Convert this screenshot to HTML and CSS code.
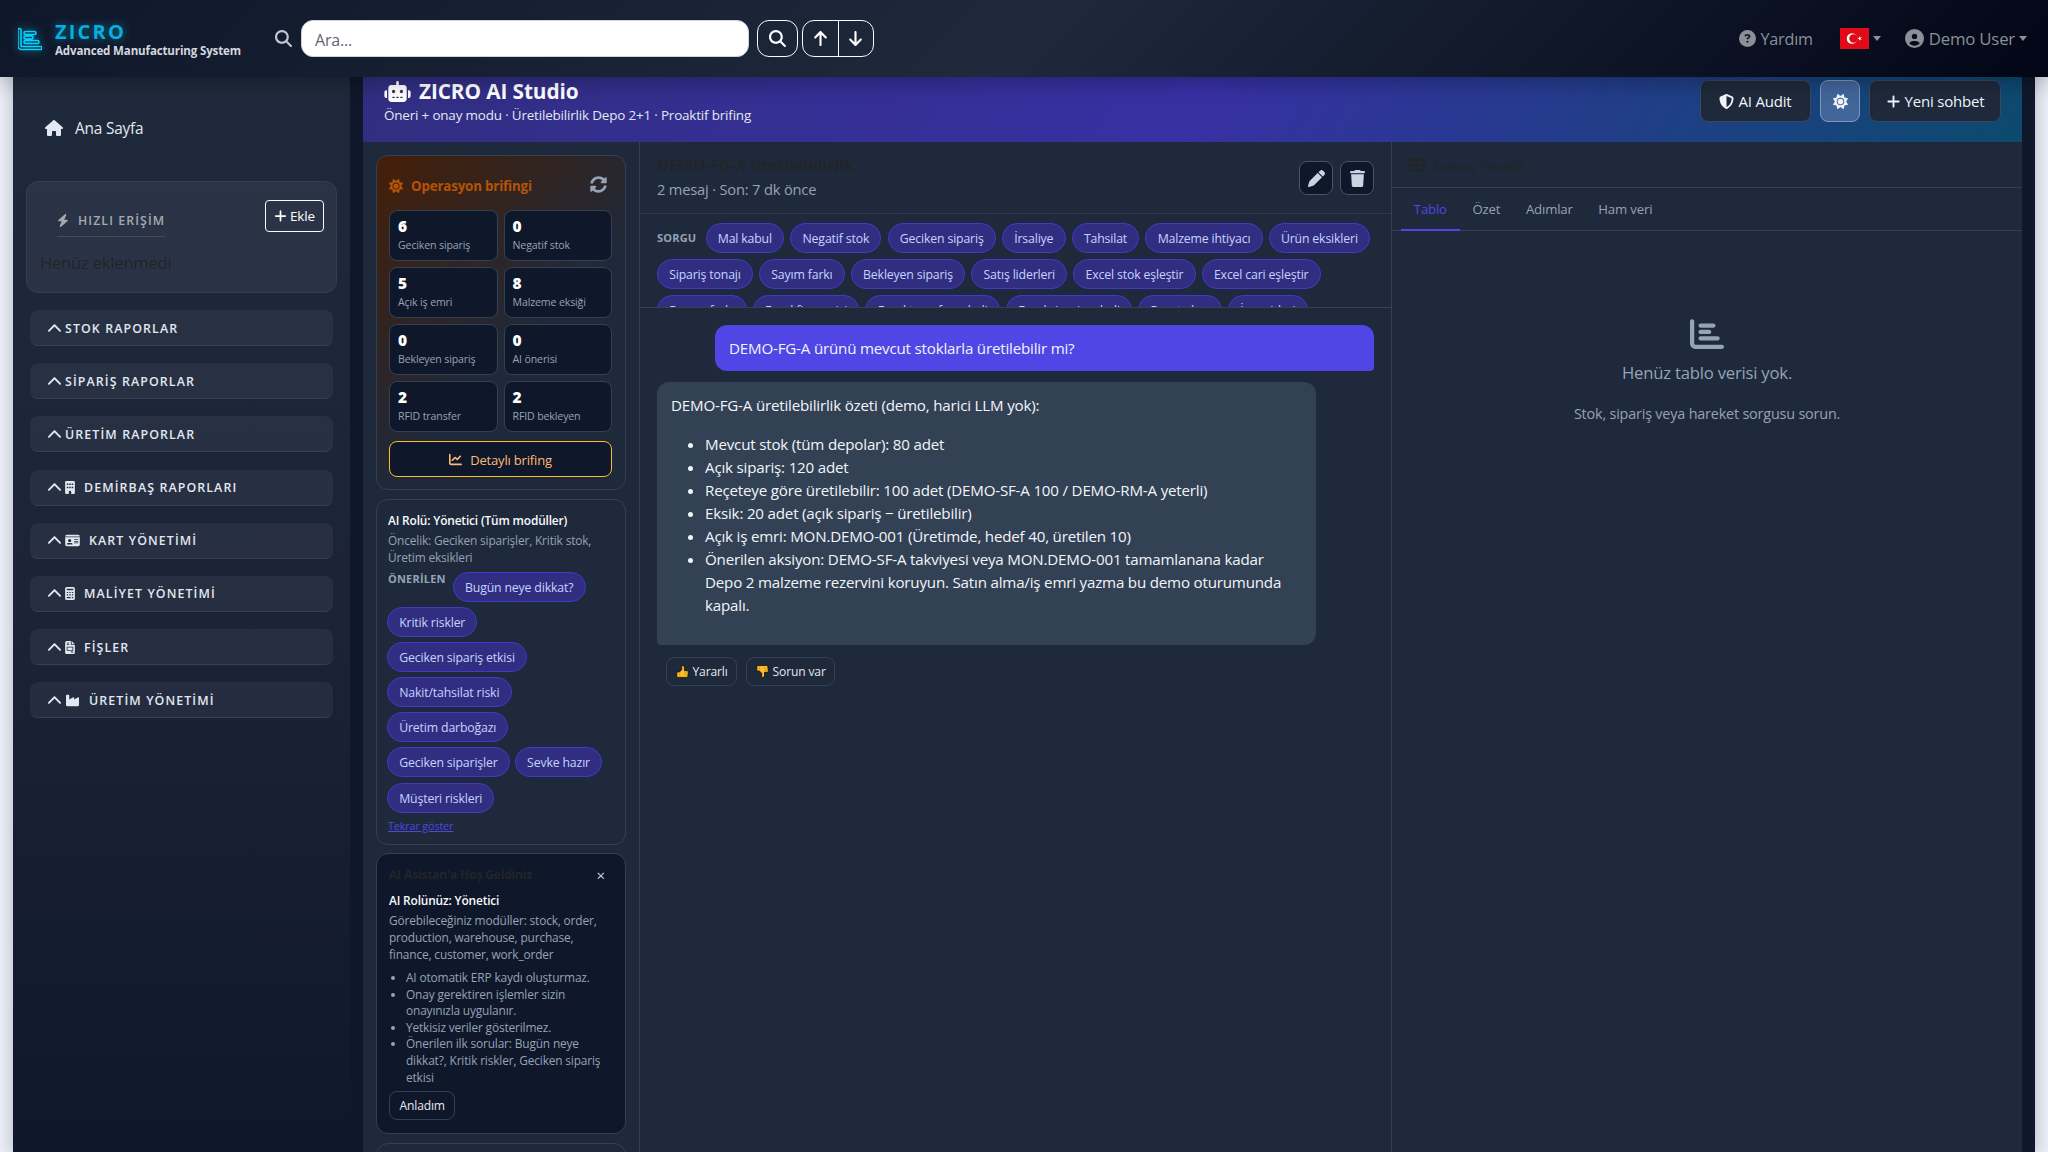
FILE: index.html
```html
<!DOCTYPE html>
<html lang="tr">
<head>
    <meta charset="UTF-8">
    <meta name="viewport" content="width=device-width, initial-scale=1.0">
    <title>ZICRO AI Studio</title>
    <link rel="stylesheet" href="styles.css">
</head>
<body>
    <!-- icon sprite -->
    <svg class="sprite" width="0" height="0">
        <symbol id="i-search" viewBox="0 0 512 512"><path d="M416 208c0 45.9-14.9 88.3-40 122.7L502.6 457.4c12.5 12.5 12.5 32.8 0 45.3s-32.8 12.5-45.3 0L330.7 376c-34.4 25.2-76.8 40-122.7 40C93.1 416 0 322.9 0 208S93.1 0 208 0S416 93.1 416 208zM208 352a144 144 0 1 0 0-288 144 144 0 1 0 0 288z"/></symbol>
        <symbol id="i-bars" viewBox="0 0 512 512"><path d="M32 32c17.7 0 32 14.3 32 32l0 336c0 8.8 7.2 16 16 16l400 0c17.7 0 32 14.3 32 32s-14.3 32-32 32L80 480c-44.2 0-80-35.8-80-80L0 64C0 46.3 14.3 32 32 32zm96 96c0-17.7 14.3-32 32-32l192 0c17.7 0 32 14.3 32 32s-14.3 32-32 32l-192 0c-17.7 0-32-14.3-32-32zm32 64l128 0c17.7 0 32 14.3 32 32s-14.3 32-32 32l-128 0c-17.7 0-32-14.3-32-32s14.3-32 32-32zm0 96l256 0c17.7 0 32 14.3 32 32s-14.3 32-32 32l-256 0c-17.7 0-32-14.3-32-32s14.3-32 32-32z"/></symbol>
        <symbol id="i-up" viewBox="0 0 384 512"><path d="M214.6 41.4c-12.5-12.5-32.8-12.5-45.3 0l-160 160c-12.5 12.5-12.5 32.8 0 45.3s32.8 12.5 45.3 0L160 141.2V448c0 17.7 14.3 32 32 32s32-14.3 32-32V141.2L329.4 246.6c12.5 12.5 32.8 12.5 45.3 0s12.5-32.8 0-45.3l-160-160z"/></symbol>
        <symbol id="i-house" viewBox="0 0 576 512"><path d="M543.8 287.6c17 0 32-14 32-32.1c1-9-3-17-11-24L309.5 7c-6-5-14-7-21-7s-15 1-22 8L10 231.5c-7 7-10 15-10 24c0 18 14 32.1 32 32.1h32V472c0 22.1 17.9 40 40 40h80c22 0 40-17.9 40-40v-88c0-17.7 14.3-32 32-32h64c17.7 0 32 14.3 32 32v88c0 22.1 18 40 40 40h80c22.1 0 40-17.9 40-40V287.6z"/></symbol>
        <symbol id="i-bolt" viewBox="0 0 448 512"><path d="M349.4 44.6c5.9-13.7 1.5-29.7-10.6-38.5s-28.6-8-39.9 1.8l-256 224c-10 8.8-13.6 22.9-8.9 35.3S50.7 288 64 288H175.5L98.6 467.4c-5.9 13.7-1.5 29.7 10.6 38.5s28.6 8 39.9-1.8l256-224c10-8.8 13.6-22.9 8.9-35.3s-16.6-20.7-30-20.7H272.5L349.4 44.6z"/></symbol>
        <symbol id="i-plus" viewBox="0 0 448 512"><path d="M256 80c0-17.7-14.3-32-32-32s-32 14.3-32 32V224H48c-17.7 0-32 14.3-32 32s14.3 32 32 32H192V432c0 17.7 14.3 32 32 32s32-14.3 32-32V288H400c17.7 0 32-14.3 32-32s-14.3-32-32-32H256V80z"/></symbol>
        <symbol id="i-help" viewBox="0 0 512 512"><path d="M256 512A256 256 0 1 0 256 0a256 256 0 1 0 0 512zM169.8 165.3c7.9-22.3 29.1-37.3 52.8-37.3h58.3c34.9 0 63.1 28.3 63.1 63.1c0 22.6-12.1 43.5-31.7 54.8L280 264.4c-.2 13-10.9 23.6-24 23.6c-13.3 0-24-10.7-24-24V250.5c0-8.6 4.6-16.5 12.1-20.8l44.3-25.4c4.7-2.7 7.6-7.7 7.6-13.1c0-8.4-6.8-15.1-15.1-15.1H222.6c-3.4 0-6.4 2.1-7.5 5.3l-.4 1.2c-4.4 12.5-18.2 19-30.6 14.6s-19-18.2-14.6-30.6l.4-1.2zM224 352a32 32 0 1 1 64 0 32 32 0 1 1 -64 0z"/></symbol>
        <symbol id="i-user" viewBox="0 0 512 512"><path d="M399 384.2C376.9 345.8 335.4 320 288 320H224c-47.4 0-88.9 25.8-111 64.2c35.2 39.2 86.2 63.8 143 63.8s107.8-24.7 143-63.8zM0 256a256 256 0 1 1 512 0A256 256 0 1 1 0 256zm256 16a72 72 0 1 0 0-144 72 72 0 1 0 0 144z"/></symbol>
        <symbol id="i-trash" viewBox="0 0 448 512"><path d="M135.2 17.7L128 32H32C14.3 32 0 46.3 0 64S14.3 96 32 96H416c17.7 0 32-14.3 32-32s-14.3-32-32-32H320l-7.2-14.3C307.4 6.8 296.3 0 284.2 0H163.8c-12.1 0-23.2 6.8-28.6 17.7zM416 128H32L53.2 467c1.6 25.3 22.6 45 47.9 45H346.9c25.3 0 46.3-19.7 47.9-45L416 128z"/></symbol>
        <symbol id="i-pen" viewBox="0 0 512 512"><path d="M362.7 19.3L314.3 67.7 444.3 197.7l48.4-48.4c25-25 25-65.5 0-90.5L453.3 19.3c-25-25-65.5-25-90.5 0zm-71 71L58.6 323.5c-10.4 10.4-18 23.3-22.2 37.4L1 481.2C-1.5 489.7 .8 498.8 7 505s15.3 8.5 23.7 6.1l120.3-35.4c14.1-4.2 27-11.8 37.4-22.2L421.7 220.3 291.7 90.3z"/></symbol>
        <symbol id="i-shield" viewBox="0 0 512 512"><path d="M256 0c4.6 0 9.2 1 13.4 2.9L457.7 82.8c22 9.3 38.4 31 38.3 57.2c-.5 99.2-41.3 280.7-213.6 363.2c-16.7 8-36.1 8-52.8 0C57.3 420.7 16.5 239.2 16 140c-.1-26.2 16.3-47.9 38.3-57.2L242.7 2.9C246.8 1 251.4 0 256 0zm0 66.8V444.8C394 378 431.1 230.1 432 141.4L256 66.8l0 0z"/></symbol>
        <symbol id="i-chevron" viewBox="0 0 512 512"><path d="M233.4 121.4c12.5-12.5 32.8-12.5 45.3 0l192 192c12.5 12.5 12.5 32.8 0 45.3s-32.8 12.5-45.3 0L256 189.3 86.6 358.6c-12.5 12.5-32.8 12.5-45.3 0s-12.5-32.8 0-45.3l192-192z"/></symbol>
        <symbol id="i-building" viewBox="0 0 384 512"><path fill-rule="evenodd" d="M48 0h288a48 48 0 0 1 48 48v416a48 48 0 0 1-48 48H240V432a48 48 0 0 0-96 0v80H48a48 48 0 0 1-48-48V48A48 48 0 0 1 48 0zM64 96v64h64V96zM160 96v64h64V96zM256 96v64h64V96zM64 224v64h64V224zM160 224v64h64V224zM256 224v64h64V224z"/></symbol>
        <symbol id="i-card" viewBox="0 0 576 512"><path fill-rule="evenodd" d="M0 96a64 64 0 0 1 64-64H512a64 64 0 0 1 64 64H0zM0 128H576V416a64 64 0 0 1-64 64H64a64 64 0 0 1-64-64zM64 405c0 6 5 11 11 11H277c6 0 11-5 11-11a53 53 0 0 0-53-53H117a53 53 0 0 0-53 53zM176 320a64 64 0 1 0 0-128 64 64 0 1 0 0 128zM352 208v32H512V208zM352 272v32H512V272zM352 336v32H512V336z"/></symbol>
        <symbol id="i-calc" viewBox="0 0 384 512"><path fill-rule="evenodd" d="M64 0H320a64 64 0 0 1 64 64V448a64 64 0 0 1-64 64H64a64 64 0 0 1-64-64V64A64 64 0 0 1 64 0zM64 64v64H320V64zM64 192v48h56v-48zM164 192v48h56v-48zM264 192v48h56v-48zM64 288v48h56v-48zM164 288v48h56v-48zM264 288v48h56v-48zM64 392v48h156v-48zM264 392v48h56v-48z"/></symbol>
        <symbol id="i-invoice" viewBox="0 0 384 512"><path fill-rule="evenodd" d="M64 0H224V128a32 32 0 0 0 32 32H384V448a64 64 0 0 1-64 64H64a64 64 0 0 1-64-64V64A64 64 0 0 1 64 0zM256 0L384 128H256zM64 64v32h96V64zM64 128v32h96v-32zM64 224v160H320V224zM96 256H288v96H96zM224 416v32h96v-32z"/></symbol>
        <symbol id="i-industry" viewBox="0 0 576 512"><path d="M64 32C46.3 32 32 46.3 32 64V304v48 80c0 26.5 21.5 48 48 48H496c26.5 0 48-21.5 48-48V304 152.2c0-18.2-19.4-29.7-35.4-21.1L352 215.4V152.2c0-18.2-19.4-29.7-35.4-21.1L160 215.4V64c0-17.7-14.3-32-32-32H64z"/></symbol>
        <symbol id="i-robot" viewBox="0 0 640 512"><path d="M320 0c17.7 0 32 14.3 32 32V96H472c39.8 0 72 32.2 72 72V440c0 39.8-32.2 72-72 72H168c-39.8 0-72-32.2-72-72V168c0-39.8 32.2-72 72-72H288V32c0-17.7 14.3-32 32-32zM208 384c-8.8 0-16 7.2-16 16s7.2 16 16 16h32c8.8 0 16-7.2 16-16s-7.2-16-16-16H208zm96 0c-8.8 0-16 7.2-16 16s7.2 16 16 16h32c8.8 0 16-7.2 16-16s-7.2-16-16-16H304zm96 0c-8.8 0-16 7.2-16 16s7.2 16 16 16h32c8.8 0 16-7.2 16-16s-7.2-16-16-16H400zM264 256a40 40 0 1 0 -80 0 40 40 0 1 0 80 0zm152 40a40 40 0 1 0 0-80 40 40 0 1 0 0 80zM48 224H64V416H48c-26.5 0-48-21.5-48-48V272c0-26.5 21.5-48 48-48zm544 0c26.5 0 48 21.5 48 48v96c0 26.5-21.5 48-48 48H576V224h16z"/></symbol>
        <symbol id="i-chart" viewBox="0 0 512 512"><path d="M64 64c0-17.7-14.3-32-32-32S0 46.3 0 64V400c0 44.2 35.8 80 80 80H480c17.7 0 32-14.3 32-32s-14.3-32-32-32H80c-8.8 0-16-7.2-16-16V64zm406.6 86.6c12.5-12.5 12.5-32.8 0-45.3s-32.8-12.5-45.3 0L320 210.7l-57.4-57.4c-12.5-12.5-32.8-12.5-45.3 0l-112 112c-12.5 12.5-12.5 32.8 0 45.3s32.8 12.5 45.3 0L240 221.3l57.4 57.4c12.5 12.5 32.8 12.5 45.3 0l128-128z"/></symbol>
        <symbol id="i-sync" viewBox="0 0 512 512"><path d="M370.72 133.28C339.458 104.008 298.888 87.962 255.848 88c-77.458.068-144.328 53.178-162.791 126.85-1.344 5.363-6.122 9.15-11.651 9.15H24.103c-7.498 0-13.194-6.807-11.807-14.176C33.933 94.924 134.813 8 256 8c66.448 0 126.791 26.136 171.315 68.685L463.03 40.97C478.149 25.851 504 36.559 504 57.941V192c0 13.255-10.745 24-24 24H345.941c-21.382 0-32.09-25.851-16.971-40.971l41.75-41.749zM32 296h134.059c21.382 0 32.09 25.851 16.971 40.971l-41.75 41.75c31.262 29.273 71.835 45.319 114.876 45.28 77.418-.07 144.315-53.144 162.787-126.849 1.344-5.363 6.122-9.15 11.651-9.15h57.304c7.498 0 13.194 6.807 11.807 14.176C478.067 417.076 377.187 504 256 504c-66.448 0-126.791-26.136-171.315-68.685L48.97 471.03C33.851 486.149 8 475.441 8 454.059V320c0-13.255 10.745-24 24-24z"/></symbol>
        <symbol id="i-sun" viewBox="0 0 512 512"><path d="M361.5 1.2c5 2.1 8.6 6.6 9.6 11.9L391 121l107.9 19.8c5.3 1 9.8 4.6 11.9 9.6s1.5 10.7-1.6 15.2L446.9 256l62.3 90.3c3.1 4.5 3.7 10.2 1.6 15.2s-6.6 8.6-11.9 9.6L391 391 371.1 498.9c-1 5.3-4.6 9.8-9.6 11.9s-10.7 1.5-15.2-1.6L256 446.9l-90.3 62.3c-4.5 3.1-10.2 3.7-15.2 1.6s-8.6-6.6-9.6-11.9L121 391 13.1 371.1c-5.3-1-9.8-4.6-11.9-9.6s-1.5-10.7 1.6-15.2L65.1 256 2.8 165.7c-3.1-4.5-3.7-10.2-1.6-15.2s6.6-8.6 11.9-9.6L121 121 140.9 13.1c1-5.3 4.6-9.8 9.6-11.9s10.7-1.5 15.2 1.6L256 65.1 346.3 2.8c4.5-3.1 10.2-3.7 15.2-1.6zM160 256a96 96 0 1 1 192 0 96 96 0 1 1 -192 0zm224 0a128 128 0 1 0 -256 0 128 128 0 1 0 256 0z"/></symbol>
        <symbol id="i-table" viewBox="0 0 512 512"><path fill-rule="evenodd" d="M64 32H448a64 64 0 0 1 64 64V416a64 64 0 0 1-64 64H64a64 64 0 0 1-64-64V96A64 64 0 0 1 64 32zM64 160v96H224V160zM288 160v96H448V160zM64 320v96H224V320zM288 320v96H448V320z"/></symbol>
        <symbol id="i-thumb" viewBox="0 0 16 16"><path d="M1 8.5h3L7 6V1.5q0-1 1.200-1 2.300.3 2.300 2.500V7H14q1.300.2 1.200 1.500l-.6 5.500q-.2 1.300-1.600 1.300H1z" fill="#fbbf24" stroke="#0b0f17"/><path d="M4.500 9v6M10 9.500h4.500M10 12h4.300" stroke="#c98a12" stroke-width=".8"/></symbol>
    </svg>

    <header class="navbar">
        <div class="brand">
            <svg class="brand-icon"><use href="#i-bars"/></svg>
            <div class="brand-text">
                <span class="brand-name">ZICRO</span>
                <span class="brand-sub">Advanced Manufacturing System</span>
            </div>
        </div>
        <div class="search">
            <svg class="search-icon"><use href="#i-search"/></svg>
            <input type="text" class="search-input" placeholder="Ara...">
            <button class="nav-btn"><svg><use href="#i-search"/></svg></button>
            <div class="nav-group">
                <button><svg><use href="#i-up"/></svg></button>
                <button><svg class="flip"><use href="#i-up"/></svg></button>
            </div>
        </div>
        <nav class="nav-right">
            <a class="nav-help"><svg><use href="#i-help"/></svg>Yardım</a>
            <a class="nav-lang">
                <svg class="flag" viewBox="0 0 29 21"><rect width="29" height="21" fill="#e30a17"/><circle cx="12" cy="10.5" r="5.3" fill="#fff"/><circle cx="13.5" cy="10.5" r="4.2" fill="#e30a17"/><path d="M17.3 10.5l4.4-1.5-2.7 3.8v-4.6l2.7 3.8z" fill="#fff"/></svg>
                <span class="caret"></span>
            </a>
            <a class="nav-user"><svg><use href="#i-user"/></svg>Demo User<span class="caret"></span></a>
        </nav>
    </header>

    <div class="layout">
        <aside class="sidebar">
            <a class="home-link"><svg><use href="#i-house"/></svg>Ana Sayfa</a>
            <div class="quick">
                <div class="quick-head">
                    <span class="quick-title"><svg><use href="#i-bolt"/></svg>HIZLI ERİŞİM</span>
                    <button class="quick-add"><svg><use href="#i-plus"/></svg>Ekle</button>
                </div>
                <p class="quick-empty">Henüz eklenmedi</p>
            </div>
            <div class="menu">
                <a class="menu-item"><svg><use href="#i-chevron"/></svg>STOK RAPORLAR</a>
                <a class="menu-item"><svg><use href="#i-chevron"/></svg>SİPARİŞ RAPORLAR</a>
                <a class="menu-item"><svg><use href="#i-chevron"/></svg>ÜRETİM RAPORLAR</a>
                <a class="menu-item"><svg><use href="#i-chevron"/></svg><svg class="mi"><use href="#i-building"/></svg>DEMİRBAŞ RAPORLARI</a>
                <a class="menu-item"><svg><use href="#i-chevron"/></svg><svg class="mi wide"><use href="#i-card"/></svg>KART YÖNETİMİ</a>
                <a class="menu-item"><svg><use href="#i-chevron"/></svg><svg class="mi"><use href="#i-calc"/></svg>MALİYET YÖNETİMİ</a>
                <a class="menu-item"><svg><use href="#i-chevron"/></svg><svg class="mi"><use href="#i-invoice"/></svg>FİŞLER</a>
                <a class="menu-item"><svg><use href="#i-chevron"/></svg><svg class="mi wide"><use href="#i-industry"/></svg>ÜRETİM YÖNETİMİ</a>
            </div>
        </aside>

        <main class="studio">
            <div class="studio-head">
                <div>
                    <h1><svg><use href="#i-robot"/></svg>ZICRO AI Studio</h1>
                    <p>Öneri + onay modu · Üretilebilirlik Depo 2+1 · Proaktif brifing</p>
                </div>
                <div class="studio-actions">
                    <button class="audit"><svg><use href="#i-shield"/></svg>AI Audit</button>
                    <button class="theme"><svg><use href="#i-sun"/></svg></button>
                    <button class="new-chat"><svg><use href="#i-plus"/></svg>Yeni sohbet</button>
                </div>
            </div>

            <div class="studio-body">
                <section class="left">
                    <div class="card briefing">
                        <div class="briefing-head">
                            <h2><svg><use href="#i-sun"/></svg>Operasyon brifingi</h2>
                            <svg class="sync"><use href="#i-sync"/></svg>
                        </div>
                        <div class="tiles">
                            <div class="tile"><b>6</b><span>Geciken sipariş</span></div>
                            <div class="tile"><b>0</b><span>Negatif stok</span></div>
                            <div class="tile"><b>5</b><span>Açık iş emri</span></div>
                            <div class="tile"><b>8</b><span>Malzeme eksiği</span></div>
                            <div class="tile"><b>0</b><span>Bekleyen sipariş</span></div>
                            <div class="tile"><b>0</b><span>AI önerisi</span></div>
                            <div class="tile"><b>2</b><span>RFID transfer</span></div>
                            <div class="tile"><b>2</b><span>RFID bekleyen</span></div>
                        </div>
                        <button class="detail-btn"><svg><use href="#i-chart"/></svg>Detaylı brifing</button>
                    </div>

                    <div class="card role">
                        <h3>AI Rolü: Yönetici (Tüm modüller)</h3>
                        <p>Öncelik: Geciken siparişler, Kritik stok, Üretim eksikleri</p>
                        <div class="role-chips">
                            <span class="label">ÖNERİLEN</span>
                            <a class="chip">Bugün neye dikkat?</a>
                            <a class="chip">Kritik riskler</a>
                            <a class="chip">Geciken sipariş etkisi</a>
                            <a class="chip">Nakit/tahsilat riski</a>
                            <a class="chip">Üretim darboğazı</a>
                            <a class="chip">Geciken siparişler</a>
                            <a class="chip">Sevke hazır</a>
                            <a class="chip">Müşteri riskleri</a>
                        </div>
                        <a class="again">Tekrar göster</a>
                    </div>

                    <div class="card welcome">
                        <div class="welcome-head"><span>AI Asistan'a Hoş Geldiniz</span><i class="close">×</i></div>
                        <h3>AI Rolünüz: Yönetici</h3>
                        <p>Görebileceğiniz modüller: stock, order, production, warehouse, purchase, finance, customer, work_order</p>
                        <ul>
                            <li>AI otomatik ERP kaydı oluşturmaz.</li>
                            <li>Onay gerektiren işlemler sizin onayınızla uygulanır.</li>
                            <li>Yetkisiz veriler gösterilmez.</li>
                            <li>Önerilen ilk sorular: Bugün neye dikkat?, Kritik riskler, Geciken sipariş etkisi</li>
                        </ul>
                        <button class="small-btn">Anladım</button>
                    </div>
                    <div class="card next"></div>
                </section>

                <section class="chat">
                    <div class="chat-head">
                        <div>
                            <h2>DEMO-FG-A üretilebilirlik</h2>
                            <p>2 mesaj · Son: 7 dk önce</p>
                        </div>
                        <div class="chat-tools">
                            <button><svg><use href="#i-pen"/></svg></button>
                            <button><svg><use href="#i-trash"/></svg></button>
                        </div>
                    </div>
                    <div class="queries">
                        <span class="label">SORGU</span>
                        <a class="chip">Mal kabul</a>
                        <a class="chip">Negatif stok</a>
                        <a class="chip">Geciken sipariş</a>
                        <a class="chip">İrsaliye</a>
                        <a class="chip">Tahsilat</a>
                        <a class="chip">Malzeme ihtiyacı</a>
                        <a class="chip">Ürün eksikleri</a>
                        <a class="chip">Sipariş tonajı</a>
                        <a class="chip">Sayım farkı</a>
                        <a class="chip">Bekleyen sipariş</a>
                        <a class="chip">Satış liderleri</a>
                        <a class="chip">Excel stok eşleştir</a>
                        <a class="chip">Excel cari eşleştir</a>
                        <a class="chip">Rezerv farkı</a>
                        <a class="chip">Excel fire verisi</a>
                        <a class="chip">Excel transfer adedi</a>
                        <a class="chip">Excel sipariş adedi</a>
                        <a class="chip">Reçete kur</a>
                        <a class="chip">İş emirleri</a>
                    </div>
                    <div class="messages">
                        <div class="msg user">DEMO-FG-A ürünü mevcut stoklarla üretilebilir mi?</div>
                        <div class="msg bot">
                            <p>DEMO-FG-A üretilebilirlik özeti (demo, harici LLM yok):</p>
                            <ul>
                                <li>Mevcut stok (tüm depolar): 80 adet</li>
                                <li>Açık sipariş: 120 adet</li>
                                <li>Reçeteye göre üretilebilir: 100 adet (DEMO-SF-A 100 / DEMO-RM-A yeterli)</li>
                                <li>Eksik: 20 adet (açık sipariş − üretilebilir)</li>
                                <li>Açık iş emri: MON.DEMO-001 (Üretimde, hedef 40, üretilen 10)</li>
                                <li>Önerilen aksiyon: DEMO-SF-A takviyesi veya MON.DEMO-001 tamamlanana kadar Depo 2 malzeme rezervini koruyun. Satın alma/iş emri yazma bu demo oturumunda kapalı.</li>
                            </ul>
                        </div>
                        <div class="feedback">
                            <button class="small-btn"><svg><use href="#i-thumb"/></svg>Yararlı</button>
                            <button class="small-btn"><svg class="down"><use href="#i-thumb"/></svg>Sorun var</button>
                        </div>
                    </div>
                </section>

                <section class="result">
                    <h2><svg><use href="#i-table"/></svg>Sonuç Paneli</h2>
                    <div class="tabs">
                        <a class="active">Tablo</a>
                        <a>Özet</a>
                        <a>Adımlar</a>
                        <a>Ham veri</a>
                    </div>
                    <div class="empty">
                        <svg><use href="#i-bars"/></svg>
                        <p class="empty-title">Henüz tablo verisi yok.</p>
                        <p class="empty-hint">Stok, sipariş veya hareket sorgusu sorun.</p>
                    </div>
                </section>
            </div>
        </main>
    </div>
</body>
</html>
```
FILE: styles.css
```css
* {
    box-sizing: border-box;
    letter-spacing: -0.013em;
}
body {
    margin: 0;
    height: 1152px;
    overflow: hidden;
    background: #e9edf5;
    color: #e2e8f0;
    font-family: 'Open Sans', 'Noto Sans', sans-serif;
    font-size: 15px;
}
h1, h2, h3, p, ul {
    margin: 0;
}
button {
    font-family: inherit;
    padding: 0;
    background: none;
    color: inherit;
    display: flex;
    align-items: center;
    justify-content: center;
}
svg {
    display: block;
    flex: none;
    fill: currentColor;
}
.sprite {
    position: absolute;
}

/* top bar */
.navbar {
    position: relative;
    z-index: 10;
    height: 77px;
    display: flex;
    align-items: center;
    background: linear-gradient(135deg, #0f172a 0%, #1e293b 50%, #020617 100%);
    box-shadow: 0 4px 20px rgba(0, 0, 0, 0.3);
}
.brand {
    display: flex;
    align-items: center;
    width: 275px;
    padding-left: 18px;
}
.brand-icon {
    width: 24px;
    height: 24px;
    margin-right: 13px;
    fill: none;
    stroke: #00d4ff;
    stroke-width: 34px;
    overflow: visible;
    filter: drop-shadow(0 0 5px rgba(0, 212, 255, 0.6));
}
.brand-text {
    display: flex;
    flex-direction: column;
}
.brand-name {
    font-size: 20px;
    line-height: 23px;
    font-weight: 700;
    letter-spacing: 2.2px;
    color: #06b0dc;
    text-shadow: 0 0 10px rgba(0, 212, 255, 0.5);
}
.brand-sub {
    font-size: 11.55px;
    line-height: 15px;
    font-weight: 700;
    white-space: nowrap;
    color: #d3d7de;
}
.search {
    display: flex;
    align-items: center;
    color: #fff;
}
.search-icon {
    width: 17px;
    height: 17px;
    margin-right: 9px;
    color: #c3c6cc;
}
.search-input {
    width: 448px;
    height: 37px;
    padding: 2px 13px 0;
    border: 1px solid #ced4da;
    border-radius: 12px;
    font-family: inherit;
    font-size: 16px;
    background: #fff;
}
.search-input::placeholder {
    color: #5f666d;
}
.nav-btn {
    width: 41px;
    height: 37px;
    margin: 0 4px 0 8px;
    border: 1px solid #f8f9fa;
    border-radius: 12px;
}
.nav-btn svg, .nav-group svg {
    width: 17px;
    height: 17px;
}
.nav-group {
    display: flex;
    width: 72px;
    height: 37px;
    border: 1px solid #f8f9fa;
    border-radius: 12px;
}
.nav-group button {
    flex: 1;
    border: none;
}
.nav-group button + button {
    border-left: 1px solid #f8f9fa;
}
.flip {
    transform: rotate(180deg);
}
.nav-right {
    display: flex;
    align-items: center;
    margin-left: auto;
    padding-right: 21px;
    color: #8c8f97;
    font-size: 16.2px;
}
.nav-right a {
    display: flex;
    align-items: center;
}
.nav-help svg {
    width: 17px;
    height: 17px;
    margin-right: 4px;
}
.nav-lang {
    margin: 0 24px 0 27px;
}
.flag {
    width: 29px;
    height: 21px;
    margin-right: 4px;
}
.nav-user {
    font-size: 16.8px;
    font-weight: 500;
}
.nav-user svg {
    width: 19px;
    height: 19px;
    margin-right: 5px;
}
.caret {
    border: 4.5px solid transparent;
    border-top: 5px solid #8c8f97;
    border-bottom: 0;
}
.nav-user .caret {
    margin-left: 4px;
}

.layout {
    display: flex;
    height: 1075px;
    margin: 0 13px;
    padding-right: 13px;
    background: #0f172a;
    box-shadow: 0 0 14px rgba(15, 23, 42, 0.25);
}

/* sidebar */
.sidebar {
    width: 337px;
    margin-right: 13px;
    background: linear-gradient(180deg, #1e293b 0%, #1c2338 50%, #0f172a 100%);
}
.home-link {
    display: flex;
    align-items: center;
    height: 104px;
    padding: 0 0 2px 32px;
    font-size: 15.4px;
    font-weight: 500;
}
.home-link svg {
    width: 18px;
    height: 16px;
    margin-right: 12px;
}
.quick {
    height: 112px;
    margin: 0 13px 17px;
    padding: 18px 12px 0 13px;
    border: 1px solid #353f50;
    border-radius: 12px;
    background: rgba(255, 255, 255, 0.06);
}
.quick-head {
    display: flex;
    justify-content: space-between;
    height: 46px;
    padding-left: 17px;
}
.quick-title {
    display: flex;
    align-items: center;
    align-self: flex-start;
    height: 37px;
    padding-top: 4px;
    border-bottom: 1px solid #434c5b;
    color: #a5aab2;
    font-size: 12.3px;
    font-weight: 600;
    letter-spacing: 1.1px;
}
.quick-title svg {
    width: 12px;
    height: 13px;
    margin-right: 9px;
}
.quick-add {
    width: 59px;
    height: 32px;
    border: 1px solid #f8f9fa;
    border-radius: 4px;
    color: #fff;
    font-size: 13.5px;
}
.quick-add svg {
    width: 13px;
    height: 14px;
    margin-right: 3px;
}
.quick-empty {
    color: #212529;
    font-size: 16.6px;
    line-height: 34px;
}
.menu {
    display: flex;
    flex-direction: column;
    gap: 17.2px;
    padding: 0 17px;
}
.menu-item {
    display: flex;
    align-items: center;
    height: 36px;
    padding: 1px 0 0 17px;
    border-bottom: 1px solid #364052;
    border-radius: 8px;
    background: rgba(255, 255, 255, 0.05);
    font-size: 12.4px;
    font-weight: 600;
    letter-spacing: 1.1px;
}
.menu-item svg {
    width: 15px;
    height: 15px;
    margin-right: 3px;
}
.menu-item .mi {
    width: 10px;
    height: 13px;
    margin-right: 9px;
}
.menu-item .wide {
    width: 15px;
}

/* studio */
.studio {
    width: 1659px;
    background: #1e293b;
}
.studio-head {
    display: flex;
    justify-content: space-between;
    height: 65px;
    padding: 3px 21px 0;
    background: linear-gradient(120deg, #312e81 0%, #3730a3 50%, #0c4a6e 100%);
}
.studio-head h1 {
    display: flex;
    align-items: center;
    margin-top: -1px;
    color: #fff;
    font-size: 20.8px;
    line-height: 24px;
    font-weight: 700;
    letter-spacing: -0.005em;
}
.studio-head h1 svg {
    width: 27px;
    height: 21px;
    margin-right: 8px;
}
.studio-head p {
    margin-top: 2px;
    font-size: 13.45px;
    line-height: 20px;
}
.studio-actions {
    display: flex;
    gap: 9px;
}
.studio-actions button {
    height: 42px;
    border: 1px solid #3b4660;
    border-radius: 8px;
    background: #1e293b;
    color: #f1f5f9;
    font-size: 15px;
    font-weight: 500;
}
.studio-actions svg {
    width: 15px;
    height: 15px;
    margin-right: 4px;
}
.studio-actions .audit {
    width: 111px;
}
.studio-actions .theme {
    width: 40px;
    border-color: #8097bd;
    background: #42659a;
}
.studio-actions .theme svg {
    margin: 0;
}
.studio-actions .new-chat {
    width: 132px;
}
.studio-body {
    display: flex;
    height: 1010px;
}
.label {
    color: #94a3b8;
    font-size: 11px;
    font-weight: 700;
    letter-spacing: 0.2px;
}
.chip {
    height: 30px;
    padding: 0 11.2px;
    border: 1px solid #4338ca;
    border-radius: 15px;
    background: #312e81;
    color: #c7d2fe;
    font-size: 12.3px;
    line-height: 29px;
    white-space: nowrap;
}

/* left column */
.left {
    width: 277px;
    padding: 13px;
    border-right: 1px solid #334155;
    overflow: hidden;
}
.card {
    border: 1px solid #334155;
    border-radius: 12px;
}
.briefing {
    height: 335px;
    padding: 13px 13px 0 12px;
    margin-bottom: 9px;
    background: linear-gradient(135deg, #451f07 0%, #1e293b 60%);
}
.briefing-head {
    display: flex;
    justify-content: space-between;
    height: 41px;
    padding-right: 5px;
}
.briefing-head h2 {
    display: flex;
    align-items: center;
    height: 34px;
    color: #b45309;
    font-size: 13.35px;
    font-weight: 700;
}
.briefing-head h2 svg {
    width: 14px;
    height: 14px;
    margin-right: 8px;
}
.sync {
    width: 17px;
    height: 17px;
    margin-top: 7px;
    color: #94a3b8;
}
.tiles {
    display: grid;
    grid-template-columns: 1fr 1fr;
    gap: 6px;
}
.tile {
    height: 51px;
    padding: 5px 8px;
    border: 1px solid #334155;
    border-radius: 8px;
    background: #0f172a;
}
.tile b {
    display: block;
    color: #fff;
    font-size: 15.5px;
    line-height: 21px;
    font-weight: 800;
}
.tile span {
    display: block;
    color: #94a3b8;
    font-size: 10.6px;
    line-height: 16px;
}
.detail-btn {
    width: 100%;
    height: 36px;
    margin-top: 9px;
    padding-top: 1px;
    border: 1px solid #fbbf24;
    border-radius: 8px;
    background: #0f172a;
    color: #fdba74;
    font-size: 13px;
    font-weight: 500;
}
.detail-btn svg {
    width: 13px;
    height: 13px;
    margin-right: 8px;
}
.role {
    height: 346px;
    padding: 10px 11px;
    margin-bottom: 8px;
}
.card h3 {
    color: #f8fafc;
    font-size: 11.9px;
    line-height: 20px;
    font-weight: 600;
}
.card p {
    color: #94a3b8;
    font-size: 11.9px;
    line-height: 17px;
}
.role p {
    margin-top: 2px;
    padding-right: 10px;
}
.role-chips {
    display: flex;
    flex-wrap: wrap;
    gap: 5.1px;
    margin: 6px 0 5px -1px;
}
.role-chips .label {
    margin-right: 2px;
    padding-left: 1px;
    line-height: 13px;
}
.again {
    color: #4f46e5;
    font-size: 10.8px;
    line-height: 16px;
    text-decoration: underline;
}
.role .again {
    display: block;
}
.welcome {
    height: 281px;
    padding: 12px 13px 0 12px;
    margin-bottom: 9px;
    background: #0f172a;
}
.welcome-head {
    display: flex;
    justify-content: space-between;
    padding-right: 7px;
    color: #212529;
    font-size: 12px;
    line-height: 18px;
    font-weight: 700;
}
.close {
    color: #cbd5e1;
    font-style: normal;
    font-weight: 400;
    font-size: 15px;
}
.welcome h3 {
    margin-top: 6px;
}
.welcome p {
    margin: 2px -5px 6px 0;
}
.welcome ul {
    padding-left: 17px;
    margin-bottom: 6px;
    color: #94a3b8;
    font-size: 11.9px;
    line-height: 16.6px;
}
.small-btn {
    height: 29px;
    padding: 0 9.5px;
    border: 1px solid #334155;
    border-radius: 8px;
    color: #e2e8f0;
    font-size: 12.1px;
}
.next {
    height: 60px;
}

/* chat column */
.chat {
    width: 752px;
    border-right: 1px solid #334155;
}
.chat-head {
    display: flex;
    justify-content: space-between;
    height: 72px;
    padding: 12px 17px 0;
    border-bottom: 1px solid #2b3a4e;
}
.chat-head h2 {
    color: #212529;
    font-size: 16.2px;
    line-height: 23px;
    font-weight: 700;
}
.chat-head p {
    color: #94a3b8;
    font-size: 14.7px;
    line-height: 24px;
}
.chat-tools {
    display: flex;
    gap: 7px;
    padding-top: 7px;
}
.chat-tools button {
    width: 34px;
    height: 34px;
    border: 1px solid #475569;
    border-radius: 8px;
    background: #0f172a;
    color: #cbd5e1;
}
.chat-tools svg {
    width: 17px;
    height: 17px;
}
.queries {
    display: flex;
    flex-wrap: wrap;
    align-content: flex-start;
    gap: 6px 6.2px;
    height: 94px;
    padding: 9px 17px 0;
    border-bottom: 1px solid #334155;
    overflow: hidden;
}
.queries .label {
    margin-right: 3px;
    line-height: 30px;
}
.messages {
    display: flex;
    flex-direction: column;
    padding: 17px;
}
.msg {
    width: 659px;
    padding: 12px 14px;
    border-radius: 12px;
    font-size: 15.15px;
    line-height: 23.04px;
    color: #f1f5f9;
}
.user {
    align-self: flex-end;
    height: 46px;
    margin-bottom: 11px;
    background: #4f46e5;
    border-bottom-right-radius: 4px;
}
.bot {
    height: 263px;
    background: #334155;
    border-bottom-left-radius: 4px;
}
.bot ul {
    margin-top: 16px;
    padding-left: 34px;
}
.feedback {
    display: flex;
    gap: 9px;
    padding: 12px 9px;
}
.feedback .small-btn {
    padding: 0 8.5px;
}
.feedback svg {
    width: 13px;
    height: 13px;
    margin-right: 4px;
}
.feedback .down {
    transform: scaleY(-1);
}

/* result column */
.result {
    flex: 1;
}
.result h2 {
    display: flex;
    align-items: center;
    height: 46px;
    padding-left: 17px;
    border-bottom: 1px solid #334155;
    color: #212529;
    font-size: 15.2px;
    font-weight: 600;
}
.result h2 svg {
    width: 16px;
    height: 16px;
    margin-right: 8px;
}
.tabs {
    display: flex;
    height: 43px;
    padding-left: 9px;
    border-bottom: 1px solid #334155;
}
.tabs a {
    height: 43px;
    padding: 0 12.8px;
    color: #94a3b8;
    font-size: 13.2px;
    line-height: 43px;
}
.tabs .active {
    color: #4f46e5;
    border-bottom: 2px solid #4f46e5;
    font-weight: 500;
}
.empty {
    display: flex;
    flex-direction: column;
    align-items: center;
    padding-top: 86px;
    color: #94a3b8;
}
.empty svg {
    width: 34px;
    height: 34px;
}
.empty-title {
    margin-top: 9px;
    font-size: 16.7px;
    line-height: 26px;
}
.empty-hint {
    margin-top: 17px;
    font-size: 14.4px;
    line-height: 22px;
}
```
